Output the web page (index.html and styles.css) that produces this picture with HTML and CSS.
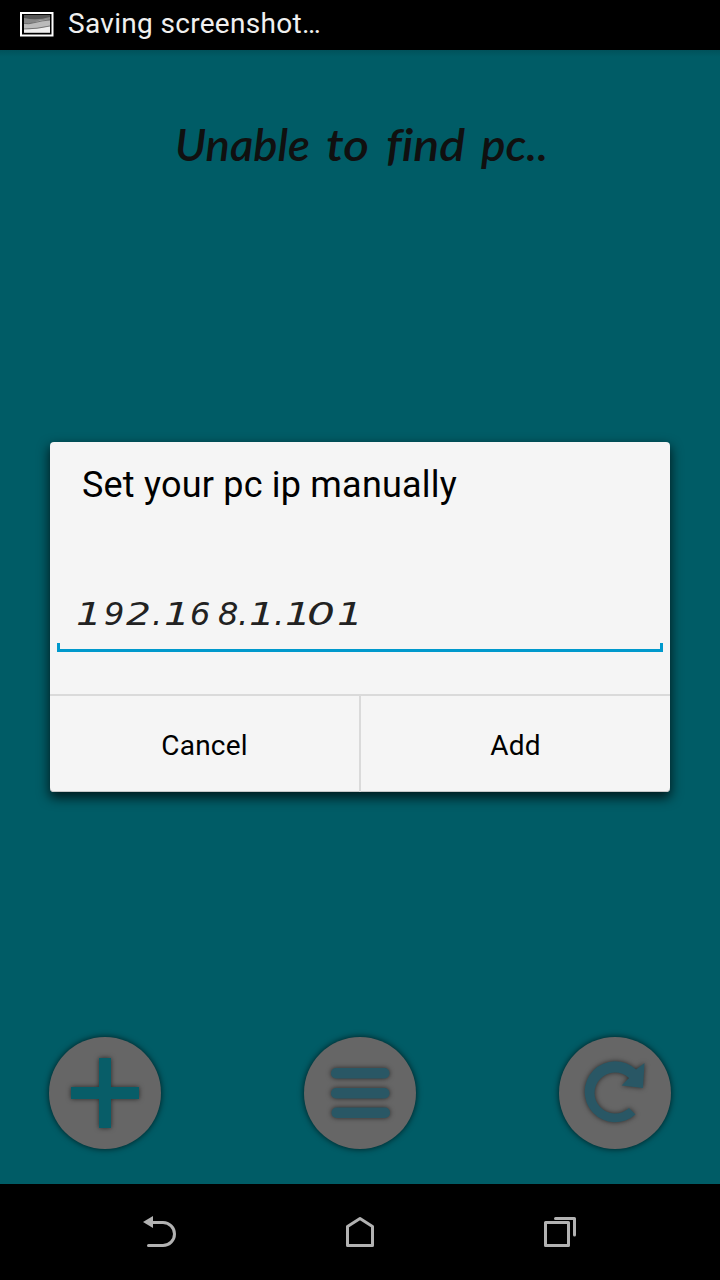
FILE: index.html
```html
<!DOCTYPE html>
<html lang="en">
<head>
<meta charset="utf-8">
<title>Set your pc ip manually</title>
<link rel="stylesheet" href="styles.css">
</head>
<body>
<div class="screen">
  <header class="status">
    <svg class="status-icon" width="34" height="25" viewBox="0 0 34 25">
      <rect x="1" y="1" width="31.500" height="22.500" fill="#000" stroke="#fff" stroke-width="2"/>
      <rect x="4" y="3" width="26" height="17.500" fill="#555"/>
      <path d="M4 6q13 3 26-1v15.500H4z" fill="#888"/>
      <path d="M4 11q4 2 11-1t15-2v12.500H4z" fill="#bbb"/>
      <path d="M4 17q13 1 26-3v6.500H4z" fill="#eee"/>
      <path d="M4 11.500q4 1 11-1t15-2.500M4 17q13 0 26-3" fill="none" stroke="#555" stroke-width=".7"/>
    </svg>
    <span class="status-text">Saving screenshot…</span>
  </header>
  <main class="app">
    <h1 class="title">
      <svg class="title-text" width="720" height="70" viewBox="0 0 720 70">
        <text y="51"><tspan x="175" textLength="135" lengthAdjust="spacingAndGlyphs">Unable</tspan> <tspan x="326" textLength="43" lengthAdjust="spacingAndGlyphs">to</tspan> <tspan x="386" textLength="79" lengthAdjust="spacingAndGlyphs">find</tspan> <tspan x="481" textLength="67" lengthAdjust="spacingAndGlyphs">pc..</tspan></text>
      </svg>
    </h1>
    <section class="dialog">
      <h2 class="dialog-title">Set your pc ip manually</h2>
      <div class="field">
        <svg class="field-text" width="300" height="44" viewBox="0 0 300 44">
          <text y="28"><tspan x="15" textLength="26" lengthAdjust="spacingAndGlyphs">1</tspan><tspan x="43">9</tspan><tspan x="65" textLength="25" lengthAdjust="spacingAndGlyphs">2</tspan><tspan x="91">.</tspan><tspan x="103" textLength="26" lengthAdjust="spacingAndGlyphs">1</tspan><tspan x="129">6</tspan><tspan x="157">8</tspan><tspan x="177">.</tspan><tspan x="188" textLength="26" lengthAdjust="spacingAndGlyphs">1</tspan><tspan x="213">.</tspan><tspan x="224" textLength="26" lengthAdjust="spacingAndGlyphs">1</tspan><tspan x="246" textLength="28" lengthAdjust="spacingAndGlyphs">0</tspan><tspan x="276" textLength="26" lengthAdjust="spacingAndGlyphs">1</tspan></text>
        </svg>
        <div class="field-line"></div>
      </div>
      <div class="actions">
        <button class="action cancel">Cancel</button>
        <button class="action add">Add</button>
      </div>
    </section>
    <div class="tools">
      <button class="tool">
        <svg width="112" height="112" viewBox="0 0 112 112"><path class="glyph plus" d="M50 21h12v29h28v12H62v29H50V62H22V50h28z"/></svg>
      </button>
      <button class="tool">
        <svg width="112" height="112" viewBox="0 0 112 112"><g class="glyph"><rect x="27" y="31" width="58.500" height="10.500" rx="5"/><rect x="27" y="51" width="58.500" height="10.500" rx="5"/><rect x="27.500" y="70.500" width="58.500" height="10.500" rx="5"/></g></svg>
      </button>
      <button class="tool">
        <svg width="112" height="112" viewBox="0 0 112 112"><path class="glyph" d="M76.500 77.500A30.500 30.500 0 1 1 77 32.500L85.500 26 84 51 62.500 48.500 70 41A20.500 20.500 0 1 0 70 71z"/></svg>
      </button>
    </div>
  </main>
  <nav class="navbar">
    <svg class="nav-icon" width="40" height="40" viewBox="0 0 40 40"><path d="M12 9.500h11a11.500 11.500 0 0 1 0 23H8.500" /><path class="solid" d="M3 9l10-6v12z"/></svg>
    <svg class="nav-icon" width="40" height="40" viewBox="0 0 40 40"><path d="M7.500 13.500L20 5.500l12.500 8v19h-25z"/></svg>
    <svg class="nav-icon" width="40" height="40" viewBox="0 0 40 40"><path d="M5.500 9.500h23v23h-23zM15.500 5.500h19V22"/></svg>
  </nav>
</div>
</body>
</html>
```
FILE: styles.css
```css
* { box-sizing: border-box; }
body { margin: 0; background: #000; font-family: Roboto, sans-serif; }
svg { display: block; }
button { border: 0; padding: 0; margin: 0; background: none; font: inherit; }
.screen { width: 720px; height: 1280px; display: flex; flex-direction: column; overflow: hidden; }
.status { height: 50px; padding: 0 20px 1px; display: flex; align-items: center; gap: 14px; background: #000; }
.status-text { color: #f0f0f0; font-size: 28px; line-height: 47px; height: 50px; letter-spacing: .32px; }
.app { height: 1134px; background: linear-gradient(#00525b, #005c66 7px); display: flex; flex-direction: column; }
.title { margin: 0; padding-top: 60px; height: 392px; }
.title-text { font-family: Lato, sans-serif; font-style: italic; font-weight: 600; font-size: 44px; font-variant-ligatures: none; fill: #101010; }
.dialog { width: 620px; height: 350px; margin: 0 50px; background: #f5f5f5; border-radius: 4px; box-shadow: 0 5px 12px 1px rgba(0, 0, 0, .7), inset 0 -1px #c8c8c8; display: flex; flex-direction: column; }
.dialog-title { margin: 0; padding: 20px 32px 0; height: 155px; font-weight: 400; font-size: 36px; line-height: 46px; letter-spacing: .2px; color: #000; }
.field { margin: 0 7px; width: 606px; height: 97px; padding-left: 4px; }
.field-text { font-family: "DejaVu Sans", sans-serif; font-style: italic; font-size: 32px; fill: #222; overflow: visible; }
.field-line { height: 9px; margin-top: 2px; margin-left: -4px; border: 3px solid #0099cc; border-top: 0; }
.actions { height: 98px; border-top: 2px solid #dadada; display: flex; }
.action { width: 309px; font-size: 28px; line-height: 32px; padding: 4px 0 0; letter-spacing: .2px; color: #000; }
.add { width: 311px; border-left: 2px solid #dadada; }
.tools { margin-top: 245px; padding: 0 49px; display: flex; justify-content: space-between; }
.tool { width: 112px; height: 112px; border-radius: 50%; background: #666; box-shadow: 0 0 6px rgba(0, 0, 0, .7); }
.glyph { fill: #295765; filter: drop-shadow(0 0 2.500px rgba(0, 0, 0, .6)); }
.plus { fill: #085d68; }
.navbar { height: 96px; padding-top: 2px; background: #000; display: flex; justify-content: center; align-items: center; gap: 160px; }
.nav-icon { fill: none; stroke: #b2b2b2; stroke-width: 3; stroke-linejoin: round; stroke-linecap: round; }
.solid { fill: #b2b2b2; stroke: none; }
```
